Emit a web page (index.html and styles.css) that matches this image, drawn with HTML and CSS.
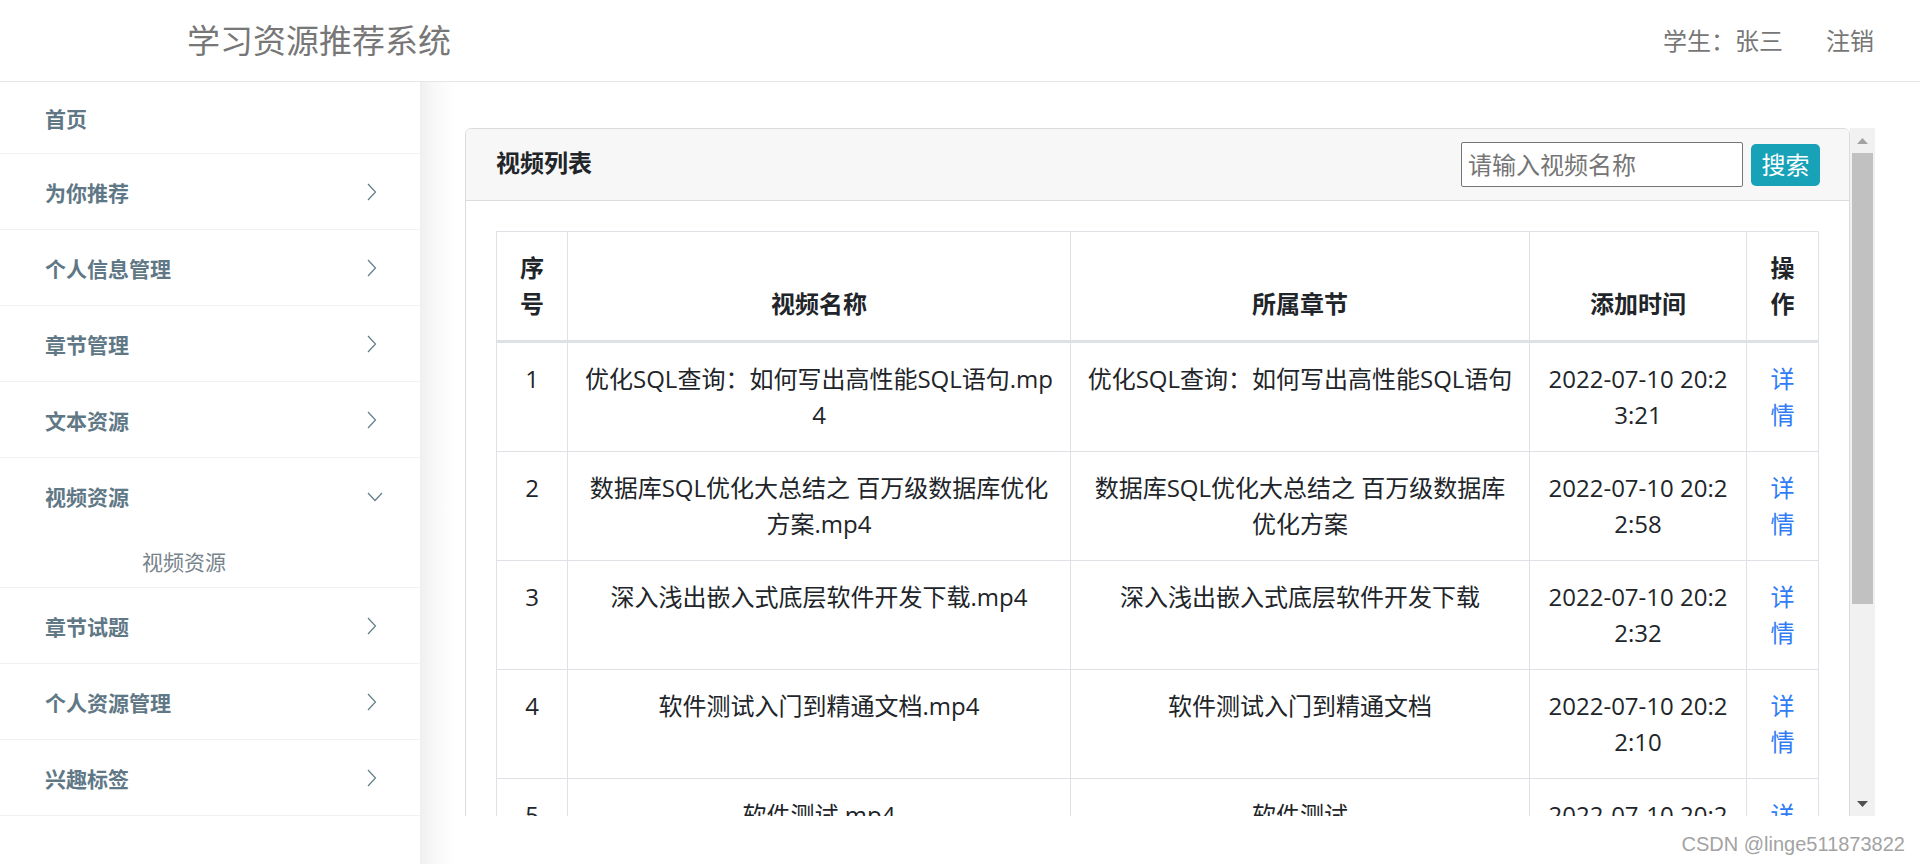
FILE: index.html
```html
<!DOCTYPE html>
<html lang="zh-CN">
<head>
<meta charset="utf-8">
<title>学习资源推荐系统</title>
<link rel="stylesheet" href="styles.css">
</head>
<body>
<header class="topbar">
  <div class="brand">学习资源推荐系统</div>
  <div class="user">
    <span class="user-name">学生：张三</span>
    <span class="logout">注销</span>
  </div>
</header>
<div class="layout">
  <nav class="sidebar">
    <div class="nav-item first"><span>首页</span></div>
    <div class="nav-item"><span>为你推荐</span><svg class="chev" width="10" height="18" viewBox="0 0 10 18"><path d="M1 1 L8.5 9 L1 17" fill="none" stroke="#607d8b" stroke-width="1.2"/></svg></div>
    <div class="nav-item"><span>个人信息管理</span><svg class="chev" width="10" height="18" viewBox="0 0 10 18"><path d="M1 1 L8.5 9 L1 17" fill="none" stroke="#607d8b" stroke-width="1.2"/></svg></div>
    <div class="nav-item"><span>章节管理</span><svg class="chev" width="10" height="18" viewBox="0 0 10 18"><path d="M1 1 L8.5 9 L1 17" fill="none" stroke="#607d8b" stroke-width="1.2"/></svg></div>
    <div class="nav-item"><span>文本资源</span><svg class="chev" width="10" height="18" viewBox="0 0 10 18"><path d="M1 1 L8.5 9 L1 17" fill="none" stroke="#607d8b" stroke-width="1.2"/></svg></div>
    <div class="nav-group">
      <div class="nav-item open"><span>视频资源</span><svg class="chev-down" width="16" height="10" viewBox="0 0 16 10"><path d="M1 1 L8 8.5 L15 1" fill="none" stroke="#607d8b" stroke-width="1.2"/></svg></div>
      <div class="nav-sub">视频资源</div>
    </div>
    <div class="nav-item"><span>章节试题</span><svg class="chev" width="10" height="18" viewBox="0 0 10 18"><path d="M1 1 L8.5 9 L1 17" fill="none" stroke="#607d8b" stroke-width="1.2"/></svg></div>
    <div class="nav-item"><span>个人资源管理</span><svg class="chev" width="10" height="18" viewBox="0 0 10 18"><path d="M1 1 L8.5 9 L1 17" fill="none" stroke="#607d8b" stroke-width="1.2"/></svg></div>
    <div class="nav-item"><span>兴趣标签</span><svg class="chev" width="10" height="18" viewBox="0 0 10 18"><path d="M1 1 L8.5 9 L1 17" fill="none" stroke="#607d8b" stroke-width="1.2"/></svg></div>
  </nav>
  <main class="main">
    <div class="scroller">
      <div class="view">
        <section class="card">
          <div class="card-header">
            <h2 class="card-title">视频列表</h2>
            <form class="search">
              <input class="search-input" type="text" placeholder="请输入视频名称">
              <button class="search-btn" type="button">搜索</button>
            </form>
          </div>
          <div class="card-body">
            <table class="grid">
              <colgroup>
                <col class="w-no"><col class="w-name"><col class="w-chapter"><col class="w-time"><col class="w-op">
              </colgroup>
              <thead>
                <tr><th>序号</th><th>视频名称</th><th>所属章节</th><th>添加时间</th><th>操作</th></tr>
              </thead>
              <tbody>
                <tr>
                  <td>1</td>
                  <td class="nw">优化SQL查询：如何写出高性能SQL语句.mp<br>4</td>
                  <td class="nw">优化SQL查询：如何写出高性能SQL语句</td>
                  <td class="nw">2022-07-10 20:2<br>3:21</td>
                  <td><a class="link" href="#">详情</a></td>
                </tr>
                <tr>
                  <td>2</td>
                  <td class="nw">数据库SQL优化大总结之 百万级数据库优化<br>方案.mp4</td>
                  <td class="nw">数据库SQL优化大总结之 百万级数据库<br>优化方案</td>
                  <td class="nw">2022-07-10 20:2<br>2:58</td>
                  <td><a class="link" href="#">详情</a></td>
                </tr>
                <tr>
                  <td>3</td>
                  <td class="nw">深入浅出嵌入式底层软件开发下载.mp4</td>
                  <td class="nw">深入浅出嵌入式底层软件开发下载</td>
                  <td class="nw">2022-07-10 20:2<br>2:32</td>
                  <td><a class="link" href="#">详情</a></td>
                </tr>
                <tr>
                  <td>4</td>
                  <td class="nw">软件测试入门到精通文档.mp4</td>
                  <td class="nw">软件测试入门到精通文档</td>
                  <td class="nw">2022-07-10 20:2<br>2:10</td>
                  <td><a class="link" href="#">详情</a></td>
                </tr>
                <tr>
                  <td>5</td>
                  <td class="nw">软件测试.mp4</td>
                  <td class="nw">软件测试</td>
                  <td class="nw">2022-07-10 20:2<br>1:56</td>
                  <td><a class="link" href="#">详情</a></td>
                </tr>
              </tbody>
            </table>
          </div>
        </section>
      </div>
      <div class="scrollbar">
        <div class="sb-btn"><svg width="11" height="6" viewBox="0 0 11 6"><path d="M0 6 L5.5 0 L11 6 Z" fill="#a3a3a3"/></svg></div>
        <div class="sb-thumb"></div>
        <div class="sb-track"></div>
        <div class="sb-btn"><svg width="11" height="6" viewBox="0 0 11 6"><path d="M0 0 L5.5 6 L11 0 Z" fill="#505050"/></svg></div>
      </div>
    </div>
  </main>
</div>
<div class="watermark">CSDN @linge511873822</div>
</body>
</html>
```

FILE: styles.css
```css
* { box-sizing: border-box; }
html, body { margin: 0; padding: 0; }
body {
  width: 1920px;
  height: 864px;
  overflow: hidden;
  position: relative;
  background: #fff;
  font-family: "Open Sans", "Noto Sans CJK SC", sans-serif;
  color: #212529;
}

.topbar {
  height: 82px;
  border-bottom: 1px solid #e6e6e6;
  display: flex;
  align-items: center;
  justify-content: space-between;
  padding: 0 46px 0 187px;
}
.brand {
  font-size: 33px;
  color: #777;
  line-height: 40px;
}
.user {
  display: flex;
  gap: 43px;
  font-size: 24px;
  color: #777;
  line-height: 36px;
}

.layout {
  display: flex;
  height: 782px;
}
.sidebar {
  width: 420px;
  flex: none;
  background: #fff;
}
.nav-item {
  height: 76px;
  display: flex;
  align-items: center;
  justify-content: space-between;
  padding: 0 42px 0 45px;
  border-bottom: 1px solid #f2f2f2;
  font-size: 21px;
  font-weight: 700;
  color: #607886;
}
.nav-item.first { height: 72px; }
.nav-item.open { border-bottom: none; height: 76px; }
.chev { display: block; margin-right: 1px; }
.chev-down { display: block; margin-right: -5px; margin-top: 2px; }
.nav-sub {
  height: 54px;
  padding-left: 142px;
  display: flex;
  align-items: center;
  font-size: 21px;
  color: #76838b;
  border-bottom: 1px solid #f2f2f2;
}

.main {
  flex: 1;
  padding: 46px 45px 48px 45px;
  background: linear-gradient(90deg, #efefef 0, #f7f7f7 12px, #fff 34px);
}
.scroller {
  display: flex;
  height: 100%;
}
.view {
  flex: 1;
  min-width: 0;
  overflow: hidden;
}
.scrollbar {
  width: 25px;
  flex: none;
  background: #f1f1f1;
  display: flex;
  flex-direction: column;
}
.sb-btn {
  height: 25px;
  display: flex;
  align-items: center;
  justify-content: center;
}
.sb-btn svg { display: block; }
.sb-thumb {
  height: 451px;
  margin: 0 2px;
  background: #c1c1c1;
}
.sb-track { flex: 1; }

.card {
  border: 1px solid #dcdcdc;
  border-radius: 6px;
  background: #fff;
}
.card-header {
  height: 72px;
  padding: 0 29px 0 30px;
  display: flex;
  align-items: center;
  justify-content: space-between;
  background: #f7f7f7;
  border-bottom: 1px solid #dcdcdc;
  border-radius: 5px 5px 0 0;
}
.card-title {
  margin: 0;
  font-size: 24px;
  font-weight: 700;
  line-height: 36px;
  color: #212529;
  margin-top: -4px;
}
.search {
  display: flex;
  align-items: center;
  gap: 8px;
  margin: 0;
}
.search-input {
  width: 282px;
  height: 45px;
  border: 1px solid #767676;
  border-radius: 2px;
  padding: 0 6px;
  font-family: inherit;
  font-size: 24px;
  color: #212529;
  background: #fff;
}
.search-input::placeholder { color: #757575; }
.search-btn {
  width: 69px;
  height: 42px;
  border: none;
  border-radius: 5px;
  background: #17a2b8;
  color: #fff;
  font-family: inherit;
  font-size: 24px;
  padding: 0;
  line-height: 42px;
}

.card-body { padding: 30px 30px 30px 30px; }

.grid {
  width: 100%;
  border-collapse: collapse;
  table-layout: fixed;
  font-size: 24px;
  line-height: 36px;
}
.w-no { width: 71px; }
.w-name { width: 503px; }
.w-chapter { width: 459px; }
.w-time { width: 217px; }
.w-op { width: 72px; }
.grid th, .grid td {
  border: 1px solid #dee2e6;
  padding: 18px;
  text-align: center;
}
.grid th {
  vertical-align: bottom;
  font-weight: 700;
  border-bottom-width: 3px;
  color: #212529;
}
.grid td {
  vertical-align: top;
  font-weight: 400;
  color: #212529;
}
.grid td.nw { white-space: nowrap; padding-left: 6px; padding-right: 6px; }
.link {
  color: #2f7cf6;
  text-decoration: none;
}

.watermark {
  position: absolute;
  right: 15px;
  bottom: 9px;
  font-family: "Liberation Sans", sans-serif;
  font-size: 20px;
  line-height: 22px;
  color: #a3a3a3;
  text-shadow: 0 0 2px #fff;
}
```
